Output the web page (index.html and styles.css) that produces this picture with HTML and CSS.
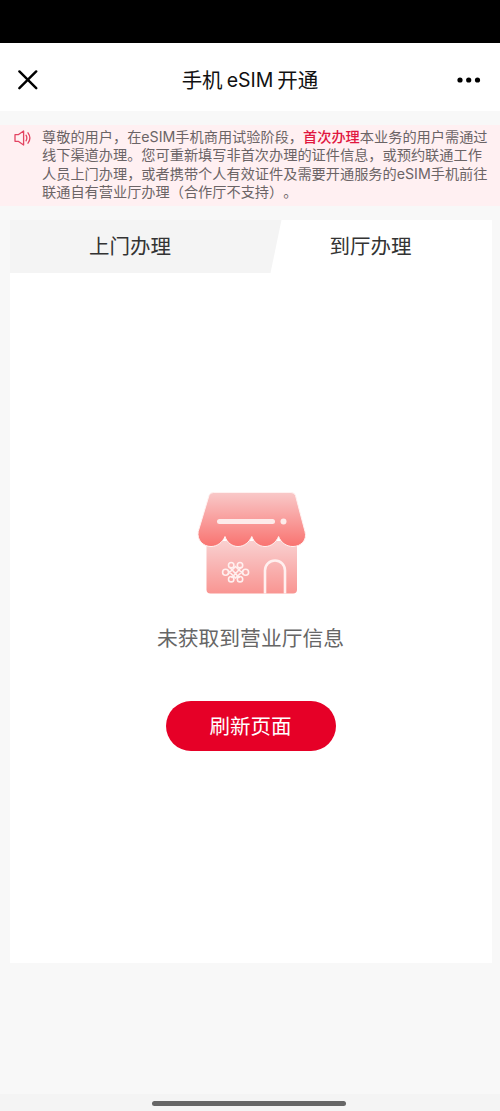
FILE: index.html
```html
<!DOCTYPE html>
<html lang="zh-CN">
<head>
<meta charset="utf-8">
<title>手机eSIM开通</title>
<link rel="stylesheet" href="styles.css">
</head>
<body>
<div class="screen">
  <div class="status-bar"></div>
  <header class="nav">
    <svg class="nav-close" width="20" height="20" viewBox="0 0 20 20"><path d="M1.4 1.4 18.2 18.2M18.2 1.4 1.4 18.2"/></svg>
    <h1 class="nav-title"><span>手机</span><span class="latin">eSIM</span><span>开通</span></h1>
    <svg class="nav-more" width="24" height="6" viewBox="0 0 24 6"><circle cx="3" cy="3" r="2.6"/><circle cx="11.7" cy="3" r="2.6"/><circle cx="20.5" cy="3" r="2.6"/></svg>
  </header>
  <section class="notice">
    <svg class="notice-icon" width="18" height="16" viewBox="0 0 18 16"><path d="M1 4.7H4.2L9.6 1V15L4.2 11.3H1Z"/><path d="M12 5.2Q13.7 8 12 10.8M14 2.8Q17.8 8 14 13.2"/></svg>
    <div class="notice-text">
      <p>尊敬的用户，在<span class="latin">eSIM</span>手机商用试验阶段，<strong>首次办理</strong>本业务的用户需通过</p>
      <p>线下渠道办理。您可重新填写非首次办理的证件信息，或预约联通工作</p>
      <p>人员上门办理，或者携带个人有效证件及需要开通服务的<span class="latin">eSIM</span>手机前往</p>
      <p>联通自有营业厅办理（合作厅不支持）。</p>
    </div>
  </section>
  <main class="card">
    <div class="tabs">
      <div class="tab tab-visit">上门办理</div>
      <div class="tab tab-hall">到厅办理</div>
    </div>
    <div class="empty">
      <svg class="shop" width="110" height="104" viewBox="0 0 110 104">
        <defs>
          <linearGradient id="roof" x1="0" y1="0" x2="0" y2="1"><stop offset="0" stop-color="#f9c9c9"/><stop offset="1" stop-color="#f97370"/></linearGradient>
          <linearGradient id="wall" x1="0" y1="0" x2="0" y2="1"><stop offset="0" stop-color="#f9d0d0"/><stop offset="1" stop-color="#f99592"/></linearGradient>
        </defs>
        <path fill="url(#wall)" d="M9.500 50H100V98.500Q100 102.500 96 102.500H13.500Q9.500 102.500 9.500 98.500Z"/>
        <path class="roof" fill="url(#roof)" d="M16.500 1.500H94Q97.500 1.500 98.500 4.500L108 40.500C110.500 49 104 55.500 96 55.500C89 55.500 84 51.500 81.600 45.500C79 51.500 74 55.500 68 55.500C62 55.500 57 51.500 54.800 45.500C52 51.500 47 55.500 41 55.500C35 55.500 30 51.500 28 45.500C25.500 51.500 20 55.500 14 55.500C6 55.500 -.3 49 1.200 40.500L12 4.500Q13 1.500 16.500 1.500Z"/>
        <path class="sign" d="M22.500 30.500H75.500"/>
        <circle cx="86.500" cy="30.500" r="3" fill="#fdebea"/>
        <path class="door" d="M68 102.500V79.500A10 10 0 0 1 88 79.500V102.500"/>
        <g class="knot">
          <path d="M32.500 76 42.500 87M44.500 76 34.500 87M30.800 79.200 34.500 83M46.400 79.200 42.700 83M30.800 83.200 38.500 75.500 46.400 83.200M34.500 83 38.500 87 42.700 83"/>
          <circle cx="28.600" cy="81.200" r="3"/><circle cx="48.600" cy="81.200" r="3"/>
          <circle cx="34.200" cy="74.200" r="2.700"/><circle cx="43" cy="74.200" r="2.700"/>
          <circle cx="34.200" cy="88.200" r="2.700"/><circle cx="43" cy="88.200" r="2.700"/>
        </g>
      </svg>
      <p class="empty-text">未获取到营业厅信息</p>
      <button class="refresh" type="button">刷新页面</button>
    </div>
  </main>
  <footer class="home"><div class="home-bar"></div></footer>
</div>
</body>
</html>
```
FILE: styles.css
```css
* { box-sizing: border-box; }
body { margin: 0; font-family: "Noto Sans CJK SC", sans-serif; color: #333; text-spacing-trim: space-all; }
h1, p { margin: 0; font-weight: 400; }
.latin { font-family: Inter, sans-serif; line-height: 1; }
.screen { width: 500px; height: 1111px; display: flex; flex-direction: column; background: #f8f8f8; overflow: hidden; }
.status-bar { height: 43px; background: #000; }
.nav { height: 68px; padding: 6px 19px 0 18px; display: flex; align-items: center; justify-content: space-between; background: #fff; }
.nav-close { fill: none; stroke: #000; stroke-width: 2.4; stroke-linecap: round; }
.nav-more { fill: #000; }
.nav-title { display: flex; align-items: center; gap: 4px; margin: 0 0 2px 5px; font-size: 20.5px; line-height: 28px; color: #111; }
.nav-title .latin { padding-top: 3px; font-size: 19.5px; }
.notice { height: 81px; margin-top: 14px; padding: 3px 0 0 14px; display: flex; align-items: flex-start; background: #fff0f2; }
.notice-icon { flex: none; margin: 2px 10px 0 0; fill: none; stroke: #e34462; stroke-width: 1.3; stroke-linejoin: round; stroke-linecap: round; }
.notice-text { display: grid; grid-template-rows: 18px 19px 18px 18px; margin-top: -1px; font-size: 14.19px; line-height: 18px; color: #6b6466; white-space: nowrap; }
.notice-text strong { color: #e1173f; font-weight: 500; }
.card { width: 482px; height: 743px; margin: 14px 0 0 9.5px; background: #fff; }
.tabs { height: 53px; display: flex; }
.tab { font-size: 20.5px; line-height: 51px; text-align: center; }
.tab-visit { width: 272px; padding-right: 31px; background: #f4f4f4; clip-path: polygon(0 0, 100% 0, 261px 100%, 0 100%); }
.tab-hall { width: 178px; }
.empty { display: flex; flex-direction: column; align-items: center; padding-top: 218px; }
.shop { margin-left: 3px; }
.roof { stroke: #fff2f1; stroke-width: 1; }
.sign { fill: none; stroke: #fdebea; stroke-width: 5; stroke-linecap: round; }
.door { fill: none; stroke: #fff0ef; stroke-width: 2.6; }
.knot { fill: none; stroke: #fff0ef; stroke-width: 1.6; }
.empty-text { margin-top: 27px; font-size: 20.8px; line-height: 30px; color: #666; }
.refresh { width: 170px; height: 50px; margin: 49px 0 0; padding: 0 0 2px; border: 0; border-radius: 25px; background: #e60027; color: #fff; font: 400 20.5px/48px "Noto Sans CJK SC", sans-serif; }
.home { height: 17px; margin-top: auto; padding-top: 7px; background: #f4f4f4; }
.home-bar { width: 194px; height: 5px; margin-left: 151.500px; border-radius: 3px; background: #666; }
```
